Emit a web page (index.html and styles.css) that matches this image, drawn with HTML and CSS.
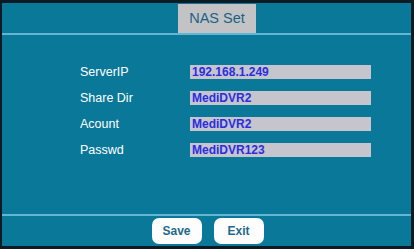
FILE: index.html
```html
<!DOCTYPE html>
<html>
<head>
<meta charset="utf-8">
<link rel="stylesheet" href="styles.css">
</head>
<body>
<div class="frame">
  <div class="tabs">
    <div class="tab">NAS Set</div>
  </div>
  <div class="form">
    <div class="row"><span class="label">ServerIP</span><span class="field">192.168.1.249</span></div>
    <div class="row"><span class="label">Share Dir</span><span class="field">MediDVR2</span></div>
    <div class="row"><span class="label">Acount</span><span class="field">MediDVR2</span></div>
    <div class="row"><span class="label">Passwd</span><span class="field">MediDVR123</span></div>
  </div>
  <div class="footer">
    <button class="btn">Save</button>
    <button class="btn">Exit</button>
  </div>
</div>
</body>
</html>
```
FILE: styles.css
```css
html, body {
  margin: 0;
  padding: 0;
  background: #0c1a24;
}
body {
  width: 414px;
  height: 249px;
  font-family: "Liberation Sans", Arial, sans-serif;
}
.frame {
  box-sizing: border-box;
  width: 414px;
  height: 249px;
  border-style: solid;
  border-color: #0c1a24;
  border-width: 3px 3px 3px 2px;
  background: #0a7898;
  display: flex;
  flex-direction: column;
}
.tabs {
  height: 29px;
  padding-top: 1px;
  border-bottom: 2px solid #62b6d3;
  display: flex;
  padding-left: 176px;
}
.tab {
  width: 78px;
  background: #c3c3c6;
  color: #1a6284;
  font-size: 14.5px;
  display: flex;
  align-items: center;
  justify-content: center;
  padding-bottom: 1px;
}
.form {
  flex: 1;
  display: flex;
  flex-direction: column;
  gap: 12px;
  padding-top: 30px;
  padding-left: 78px;
}
.row {
  display: flex;
  align-items: center;
  height: 14px;
}
.label {
  width: 110px;
  color: #ffffff;
  font-size: 12.5px;
}
.field {
  box-sizing: border-box;
  width: 181px;
  height: 14px;
  background: #c6c4cc;
  color: #2a2ee0;
  font-size: 12px;
  font-weight: bold;
  line-height: 14px;
  padding-left: 2px;
}
.footer {
  height: 30px;
  border-top: 2px solid #62b6d3;
  display: flex;
  justify-content: center;
  align-items: flex-end;
  gap: 12px;
  padding-left: 2px;
}
.btn {
  width: 50px;
  height: 26px;
  margin-bottom: 2px;
  border: none;
  border-radius: 7px;
  background: #fdfdfd;
  color: #1f6a8a;
  font-family: "Liberation Sans", Arial, sans-serif;
  font-size: 12px;
  font-weight: bold;
  padding: 0;
}
```
